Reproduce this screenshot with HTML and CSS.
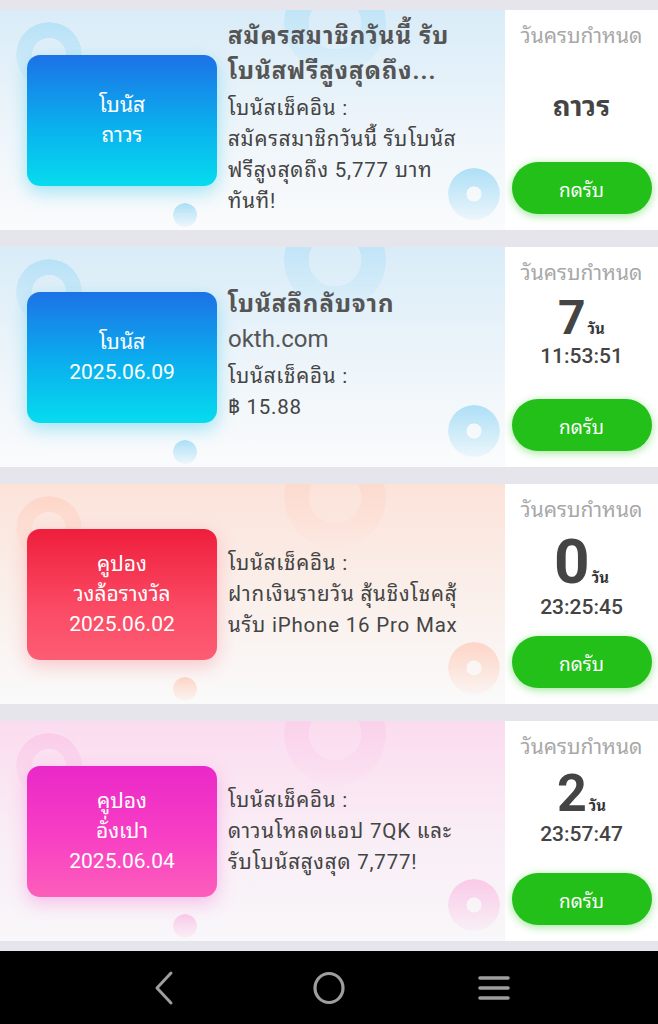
FILE: index.html
```html
<!DOCTYPE html>
<html lang="th">
<head>
    <meta charset="UTF-8">
    <meta name="viewport" content="width=device-width, initial-scale=1.0">
    <title>โบนัส</title>
    <link rel="stylesheet" href="styles.css">
</head>
<body>

    <div class="list">
        <div class="card blue">
            <div class="card-main">
                <span class="deco ring-a"></span>
                <span class="deco ring-b"></span>
                <span class="deco ring-c"></span>
                <span class="deco dot"></span>
                <div class="badge">โบนัส<br>ถาวร</div>
                <div class="info">
                    <div class="title">สมัครสมาชิกวันนี้ รับ<br>โบนัสฟรีสูงสุดถึง...</div>
                    <div class="desc">โบนัสเช็คอิน :<br>สมัครสมาชิกวันนี้ รับโบนัส<br>ฟรีสูงสุดถึง 5,777 บาท<br>ทันที!</div>
                </div>
            </div>
            <div class="card-side">
                <div class="due-label">วันครบกำหนด</div>
                <div class="due"><span class="forever">ถาวร</span></div>
                <button class="claim">กดรับ</button>
            </div>
        </div>

        <div class="card blue">
            <div class="card-main">
                <span class="deco ring-a"></span>
                <span class="deco ring-b"></span>
                <span class="deco ring-c"></span>
                <span class="deco dot"></span>
                <div class="badge">โบนัส<br>2025.06.09</div>
                <div class="info">
                    <div class="title">โบนัสลึกลับจาก<br><span class="latin">okth.com</span></div>
                    <div class="desc">โบนัสเช็คอิน :<br>฿ 15.88</div>
                </div>
            </div>
            <div class="card-side">
                <div class="due-label">วันครบกำหนด</div>
                <div class="due">
                    <div class="days"><b class="num">7</b><span class="unit">วัน</span></div>
                    <div class="clock">11:53:51</div>
                </div>
                <button class="claim">กดรับ</button>
            </div>
        </div>

        <div class="card red">
            <div class="card-main">
                <span class="deco ring-a"></span>
                <span class="deco ring-b"></span>
                <span class="deco ring-c"></span>
                <span class="deco dot"></span>
                <div class="badge">คูปอง<br>วงล้อรางวัล<br>2025.06.02</div>
                <div class="info">
                    <div class="desc">โบนัสเช็คอิน :<br>ฝากเงินรายวัน สุ้นชิงโชคสุ้<br>นรับ iPhone 16 Pro Max</div>
                </div>
            </div>
            <div class="card-side">
                <div class="due-label">วันครบกำหนด</div>
                <div class="due">
                    <div class="days"><b class="num big">0</b><span class="unit">วัน</span></div>
                    <div class="clock">23:25:45</div>
                </div>
                <button class="claim">กดรับ</button>
            </div>
        </div>

        <div class="card pink">
            <div class="card-main">
                <span class="deco ring-a"></span>
                <span class="deco ring-b"></span>
                <span class="deco ring-c"></span>
                <span class="deco dot"></span>
                <div class="badge">คูปอง<br>อั่งเปา<br>2025.06.04</div>
                <div class="info">
                    <div class="desc">โบนัสเช็คอิน :<br>ดาวนโหลดแอป 7QK และ<br>รับโบนัสสูงสุด 7,777!</div>
                </div>
            </div>
            <div class="card-side">
                <div class="due-label">วันครบกำหนด</div>
                <div class="due">
                    <div class="days"><b class="num mid">2</b><span class="unit">วัน</span></div>
                    <div class="clock">23:57:47</div>
                </div>
                <button class="claim">กดรับ</button>
            </div>
        </div>
    </div>

    <nav class="navbar">
        <svg width="36" height="36" viewBox="0 0 36 36"><path d="M25 3 L11 18 L25 33" fill="none" stroke="#9e9e9e" stroke-width="3" stroke-linecap="round" stroke-linejoin="round"/></svg>
        <svg width="36" height="36" viewBox="0 0 36 36"><ellipse cx="18" cy="18" rx="14" ry="14.5" fill="none" stroke="#9e9e9e" stroke-width="3.2"/></svg>
        <svg width="36" height="36" viewBox="0 0 36 36"><path d="M4 8 H32 M4 18 H32 M4 28 H32" stroke="#9e9e9e" stroke-width="3.6" stroke-linecap="round"/></svg>
    </nav>

</body>
</html>
```

FILE: styles.css
```css
body {
    margin: 0;
    background: #e5e5eb;
    font-family: Roboto, "Noto Sans Thai Looped", "Noto Sans Thai", sans-serif;
    color: #444;
}
.list {
    display: flex;
    flex-direction: column;
    gap: 17px;
    padding: 10px 0;
}
.card {
    display: flex;
    height: 220px;
}
.card-main {
    position: relative;
    flex: 1;
    display: flex;
    align-items: center;
    padding-left: 27px;
    overflow: hidden;
}
.blue .card-main {
    background: linear-gradient(180deg, #d9ecf8 0%, #eef5fa 55%, #fafbfc 100%);
}
.red .card-main {
    background: linear-gradient(180deg, #fce3da 0%, #faf0ec 55%, #fafafa 100%);
}
.pink .card-main {
    background: linear-gradient(180deg, #fbdcef 0%, #f9eef6 55%, #f8f7f9 100%);
}

/* background rings */
.deco {
    position: absolute;
    border-radius: 50%;
    -webkit-mask: radial-gradient(circle, transparent 0 var(--hole), #000 calc(var(--hole) + 1%));
    mask: radial-gradient(circle, transparent 0 var(--hole), #000 calc(var(--hole) + 1%));
}
.ring-a {
    left: 16px;
    top: 12px;
    width: 66px;
    height: 66px;
    --hole: 36%;
    opacity: 0.7;
}
.ring-b {
    left: 284px;
    top: -38px;
    width: 102px;
    height: 102px;
    --hole: 36%;
    opacity: 0.7;
}
.ring-c {
    left: 448px;
    top: 158px;
    width: 52px;
    height: 52px;
    --hole: 20%;
}
.dot {
    left: 173px;
    top: 193px;
    width: 24px;
    height: 24px;
    --hole: 0%;
}
.blue .deco { background: linear-gradient(180deg, rgba(150, 215, 245, 0.75), rgba(200, 235, 250, 0.25)); }
.red .deco { background: linear-gradient(180deg, rgba(255, 200, 180, 0.7), rgba(255, 225, 215, 0.2)); }
.pink .deco { background: linear-gradient(180deg, rgba(250, 185, 225, 0.7), rgba(252, 215, 238, 0.2)); }

.badge {
    position: relative;
    flex: none;
    width: 190px;
    height: 131px;
    border-radius: 13px;
    display: flex;
    align-items: center;
    justify-content: center;
    text-align: center;
    color: #fff;
    font-size: 21px;
    line-height: 30px;
}
.blue .badge {
    background: linear-gradient(180deg, #1c72e6 0%, #0ab0ee 55%, #06dcee 100%);
    box-shadow: 0 6px 18px rgba(0, 190, 235, 0.35);
}
.red .badge {
    background: linear-gradient(180deg, #ee1e3c 0%, #fb4a64 60%, #fc5d74 100%);
    box-shadow: 0 6px 18px rgba(250, 90, 110, 0.3);
}
.pink .badge {
    background: linear-gradient(180deg, #ea28c8 0%, #f83fc4 55%, #fc5fba 100%);
    box-shadow: 0 6px 18px rgba(245, 90, 210, 0.35);
}
.info {
    position: relative;
    margin-left: 11px;
}
.title {
    font-size: 24px;
    font-weight: bold;
    line-height: 35px;
    letter-spacing: 1px;
    color: #555;
    margin-top: -4px;
    margin-bottom: 4px;
}
.title .latin {
    font-weight: normal;
    font-size: 24px;
    letter-spacing: 0;
}
.desc {
    font-size: 20.5px;
    line-height: 31px;
    letter-spacing: 0.8px;
    color: #444;
}

.card-side {
    width: 153px;
    background: #fff;
    display: flex;
    flex-direction: column;
    align-items: center;
    padding: 12px 0 16px;
    box-sizing: border-box;
}
.due-label {
    font-size: 21px;
    color: #a8a8a8;
    line-height: 28px;
}
.due {
    flex: 1;
    display: flex;
    flex-direction: column;
    align-items: center;
    padding-top: 7px;
}
.forever {
    margin-top: 32px;
    font-size: 28px;
    font-weight: bold;
    line-height: 36px;
    color: #444;
}
.days {
    display: flex;
    align-items: baseline;
    line-height: 1;
}
.num {
    font-size: 48px;
    font-weight: bold;
    color: #444;
}
.num.big { font-size: 62px; }
.num.mid { font-size: 52px; }
.unit {
    font-size: 15px;
    font-weight: bold;
    color: #333;
    margin-left: 2px;
}
.clock {
    font-size: 21px;
    font-weight: 500;
    color: #444;
    line-height: 28px;
}
.claim {
    width: 140px;
    height: 52px;
    border: none;
    border-radius: 26px;
    background: #22c018;
    color: #fff;
    font-family: inherit;
    font-size: 19px;
    box-shadow: 0 2px 8px rgba(40, 200, 30, 0.45);
    cursor: pointer;
}

.navbar {
    height: 73px;
    background: #000;
    display: flex;
    align-items: center;
    gap: 129px;
    padding-left: 146px;
}
```
